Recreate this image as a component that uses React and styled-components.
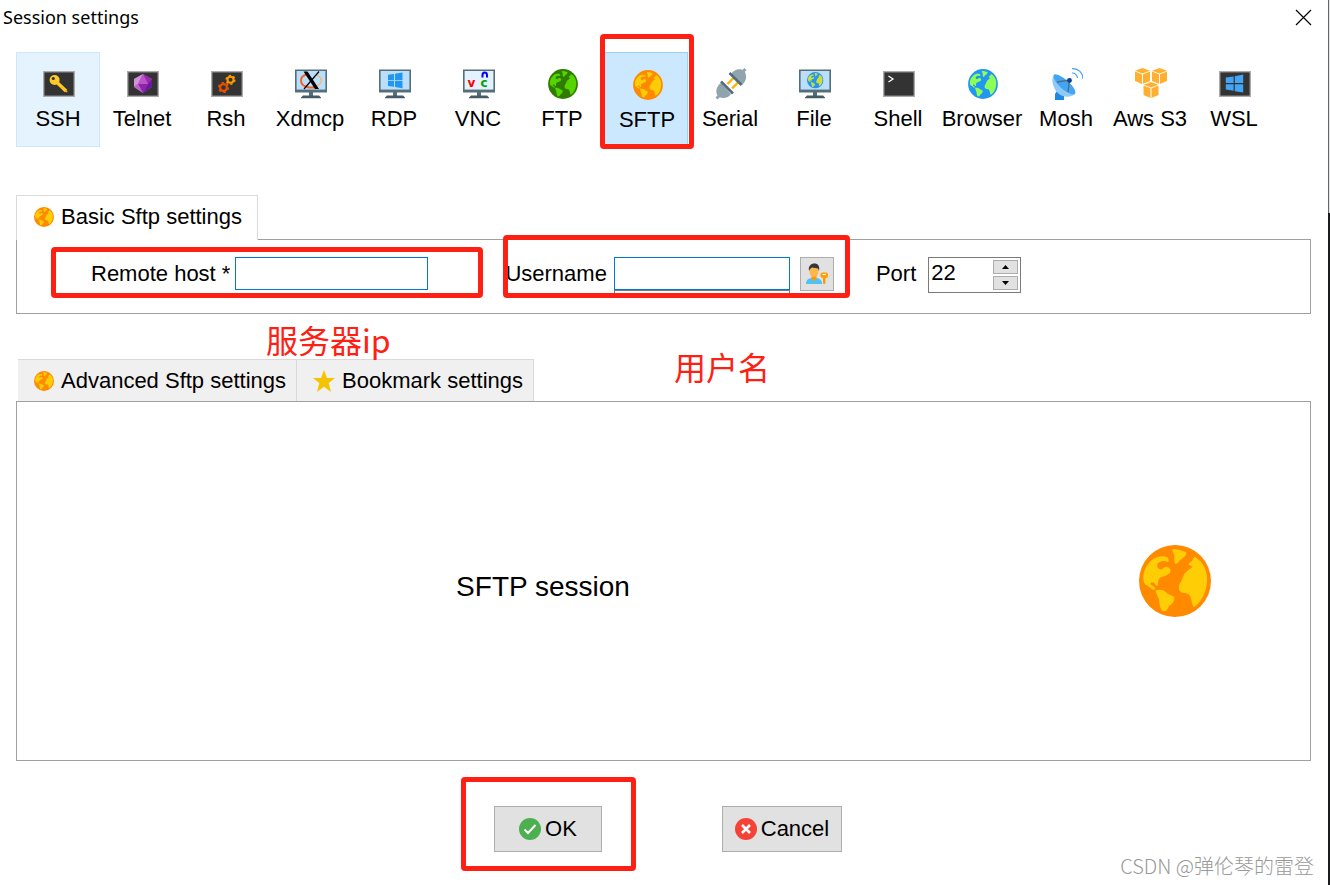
import styled, { createGlobalStyle, css } from 'styled-components';

const GlobalStyle = createGlobalStyle`
  * {
    box-sizing: border-box;
  }

  body {
    margin: 0;
    background: #fff;
    color: #000;
    font-family: 'Liberation Sans', Arial, sans-serif;
    font-size: 22px;
    line-height: 24px;
  }

  button,
  input {
    margin: 0;
    padding: 0;
    border-radius: 0;
    color: inherit;
    font: inherit;
  }

  svg {
    display: block;
    flex: none;
  }
`;

const Page = styled.div`
  display: grid;
  grid-template-columns: minmax(0, 1fr) 2px;
  min-height: 100vh;
`;

const WindowEdge = styled.div`
  background:
    linear-gradient(#66676a, #66676a) 0 0 / 1px 213px no-repeat,
    linear-gradient(#e4e4e4 213px, #1b1c1e 213px);
`;

const Dialog = styled.main`
  display: flex;
  flex-direction: column;
`;

const TitleBar = styled.header`
  display: flex;
  align-items: center;
  justify-content: space-between;
  height: 36px;
  padding: 0 16px 2px 3px;
`;

const Title = styled.h1`
  margin: 0;
  font-family: 'Noto Sans', sans-serif;
  font-size: 18px;
  font-weight: 400;
  line-height: 24px;
`;

const CloseButton = styled.button`
  border: 0;
  background: none;
`;

const Content = styled.div`
  display: flex;
  flex-direction: column;
  padding: 16px 17px 0 16px;
`;

const Toolbar = styled.nav`
  display: flex;
  margin-bottom: 48px;
`;

const Tool = styled.button`
  position: relative;
  display: flex;
  flex-direction: column;
  align-items: center;
  gap: 7px;
  width: 84px;
  height: 95px;
  padding-top: 15px;
  border: 1px solid transparent;
  background: none;
  white-space: nowrap;

  svg {
    margin-left: 2px;
  }

  ${(props) =>
    props.$state === 'hover' &&
    css`
      background: #e5f3ff;
      border-color: #cce8ff;
    `}

  ${(props) =>
    props.$state === 'active' &&
    css`
      padding: 16px 0 0 2px;
      background: #cce8ff;
      border-color: #99d1ff;
    `}
`;

// red rectangle drawn over a control
const Mark = styled.span`
  position: absolute;
  inset: ${(props) => props.$inset};
  z-index: 2;
  border: 5px solid #ff2014;
  border-radius: 4px;
  pointer-events: none;
`;

const Note = styled.p`
  position: absolute;
  top: ${(props) => props.$top};
  left: ${(props) => props.$left};
  z-index: 2;
  margin: 0;
  color: #ff2014;
  font-family: 'Noto Sans CJK SC', sans-serif;
  font-size: 32px;
  font-weight: 400;
  line-height: 40px;
  white-space: nowrap;
`;

const Section = styled.section`
  position: relative;
  margin-bottom: 45px;
`;

const Tabs = styled.div`
  display: flex;
  padding-left: ${(props) => (props.$inactive ? '2px' : 0)};
`;

const Tab = styled.button`
  display: flex;
  align-items: center;
  gap: 7px;
  height: 42px;
  padding: 0 10px 0 16px;
  border: solid #d9d9d9;
  border-width: 1px 1px 0 0;
  background: #f0f0f0;
  white-space: nowrap;

  ${(props) =>
    props.$selected &&
    css`
      position: relative;
      z-index: 1;
      height: 45px;
      margin-bottom: -1px;
      padding: 0 15px 2px 17px;
      border-width: 1px 1px 0;
      background: #fff;
    `}
`;

const FormPanel = styled.form`
  display: flex;
  align-items: flex-start;
  padding: 17px 16px 20px 74px;
  border: 1px solid #a0a0a0;
`;

const Field = styled.div`
  position: relative;
  display: flex;
  gap: ${(props) => props.$gap};
  margin-right: ${(props) => props.$after || 0};

  label {
    line-height: 34px;
    white-space: nowrap;
  }
`;

const TextInput = styled.input`
  width: ${(props) => props.$width};
  height: 33px;
  padding: 0 4px;
  border: 1px solid #0078d7;
  outline: 0;
  background: #fff;
`;

const Combo = styled.div`
  height: 36px;
  background: linear-gradient(#7a7a7a, #7a7a7a) 0 33px / 100% 1px no-repeat;
  border: solid #7a7a7a;
  border-width: 0 1px;

  input {
    display: block;
    margin: 0 -1px;
  }
`;

const UserButton = styled.button`
  display: grid;
  place-items: center;
  width: 34px;
  height: 34px;
  margin-left: 3px;
  border: 1px solid #adadad;
  background: #e1e1e1;
`;

const Spin = styled.div`
  display: flex;
  width: 93px;
  height: 36px;
  padding: 2px;
  border: 1px solid #7a7a7a;

  input {
    flex: 1;
    min-width: 0;
    height: 26px;
    border: 0;
    outline: 0;
  }
`;

const SpinButtons = styled.div`
  display: grid;
  gap: 2px;
  width: 25px;

  button {
    display: grid;
    place-items: center;
    border: 1px solid #adadad;
    background: #e1e1e1;
  }
`;

const SessionPanel = styled.div`
  display: flex;
  align-items: center;
  gap: 70px;
  min-height: 360px;
  padding-right: 99px;
  border: 1px solid #a0a0a0;
`;

const SessionName = styled.h2`
  flex: 1;
  margin: 0;
  padding-top: 12px;
  font-size: 28px;
  font-weight: 400;
  line-height: 32px;
  text-align: center;
`;

const Actions = styled.div`
  display: flex;
  justify-content: center;
  gap: 120px;
  padding-left: 9px;
`;

const ActionButton = styled.button`
  position: relative;
  display: flex;
  align-items: center;
  justify-content: center;
  gap: 4px;
  width: ${(props) => props.$width};
  height: 46px;
  border: 1px solid #adadad;
  background: #e1e1e1;
`;

const Watermark = styled.footer`
  padding: 2px 14px 0 0;
  color: #999;
  font-family: 'Noto Sans CJK SC', sans-serif;
  font-size: 20px;
  font-weight: 300;
  text-align: right;
`;

const Globe = ({ size = 30, sea = '#ff8a00', land = '#ffcd05', ...rest }) => (
  <svg width={size} height={size} viewBox="0 0 216 216" {...rest}>
    <circle cx="108" cy="108" r="108" fill={sea} />
    <g fill={land}>
      <path d="M13 100C12 80 22 58 40 44C55 33 72 31 84 36C90 41 91 46 87 51C78 46 65 47 57 55C51 64 57 73 67 74C73 70 76 64 83 65C93 67 97 76 93 83C85 92 72 94 63 98C57 104 57 112 57 120C53 125 51 124 49 118C44 109 35 111 34 117C36 122 43 121 47 127C50 133 46 137 40 133C33 128 27 122 20 119C14 114 13 107 13 100Z" />
      <path d="M50 136C60 133 74 134 80 141C87 150 103 151 106 157C107 168 100 178 90 183C86 192 84 199 72 199C64 192 61 181 61 169C61 158 51 151 50 136Z" />
      <path d="M101 13C116 13 133 17 142 23C141 35 130 40 123 45C119 53 112 58 108 56C108 48 104 44 106 36C107 27 98 20 101 13Z" />
      <path d="M166 35C187 45 201 67 204 94C206 132 192 168 165 187C156 178 160 161 151 150C144 140 128 148 122 137C117 126 120 118 126 110C131 101 134 85 144 79L161 65L150 60C148 52 158 52 160 46Z" />
    </g>
  </svg>
);

const Screen = ({ children }) => (
  <svg width="32" height="32" viewBox="0 0 32 32">
    <rect x=".7" y="3.7" width="30.6" height="24.6" fill="#333" stroke="#aaa" strokeWidth="1.4" />
    {children}
  </svg>
);

const Monitor = ({ fill = '#bbdefb', children }) => (
  <svg width="32" height="32" viewBox="0 0 32 32">
    <path d="M14 24h4v4h-4z" fill="#546e7a" />
    <path d="M8 27.5h16l2 2v.8H6v-.8z" fill="#455a64" />
    <path d="M0 1.5h32v23H0z" fill="#546e7a" />
    <path d="M1.6 3h28.8v18.6H1.6z" fill={fill} />
    {children}
  </svg>
);

const KeyIcon = () => (
  <Screen>
    <path d="M13 13.5l10 9.5" stroke="#ffca28" strokeWidth="3.4" />
    <path d="M17 19.5l1.2-1 2 1.500-.2 1 2 1-.2 1.500 2 1 1-1.500" fill="#ffb300" />
    <circle cx="11.600" cy="12" r="5" fill="#ffca28" />
    <circle cx="10.300" cy="10.500" r="1.600" fill="#333" />
  </Screen>
);

const GemIcon = () => (
  <Screen>
    <path d="M16 6l9 5v8l-9 6-9-6v-8z" fill="#ab47bc" />
    <path d="M16 6l-9 5v8l4-3z" fill="#ce93d8" />
    <path d="M16 6l9 5-4 6z" fill="#9c27b0" />
    <path d="M11 16h10l-5 9z" fill="#8e24aa" />
    <path d="M25 11v8l-9 6 5-9z" fill="#6a1b9a" />
    <path d="M7 19l4-3 5 9z" fill="#ba68c8" />
    <path d="M16 6l5 10H11z" fill="#ba55c8" />
  </Screen>
);

const GearsIcon = () => (
  <Screen>
    <g fill="none">
      <circle cx="19.5" cy="11.8" r="3" stroke="#ff9800" strokeWidth="2" />
      <circle cx="19.5" cy="11.8" r="4.3" stroke="#ff9800" strokeWidth="1.6" strokeDasharray="2.2 2.3" />
      <circle cx="12.5" cy="19.5" r="3.4" stroke="#e65100" strokeWidth="2.2" />
      <circle cx="12.5" cy="19.5" r="4.8" stroke="#e65100" strokeWidth="1.6" strokeDasharray="2.5 2.53" />
    </g>
  </Screen>
);

const XIcon = () => (
  <Monitor>
    <g fill="none">
      <path d="M12 6.500C4 8 4 17 12 19c4 1 7 .5 9-.5" stroke="#f4622a" strokeWidth="2" />
      <path d="M21 7c7 2 7 8 .5 11" stroke="#ffb25c" strokeWidth="1.300" />
    </g>
    <path d="M8.500 3.500h4L24 21h-4z" />
    <path d="M24 3.500L9 21" stroke="#000" strokeWidth="1.200" />
  </Monitor>
);

const WindowsLogo = ({ fill }) => (
  <path d="M9 8.3l6-.9v6H9zM16 7.3l7.5-1.3v7.4H16zM9 14.3h6v6l-6-.8zM16 14.3h7.5v7.5L16 20.5z" fill={fill} />
);

const RdpIcon = () => (
  <Monitor>
    <g transform="translate(0 -1.5)">
      <WindowsLogo fill="#2196f3" />
    </g>
  </Monitor>
);

const VncIcon = () => (
  <Monitor fill="#e3f2fd">
    <g fontFamily="DejaVu Sans" fontWeight="bold" fontSize="12">
      <text x="4.5" y="19" fill="#f00">v</text>
      <text x="17.5" y="19" fill="#00a000">c</text>
    </g>
    <path d="M19.5 9.500V7Q19.500 4.500 21.700 4.500T24 7V9.500" fill="none" stroke="#00f" strokeWidth="2" />
  </Monitor>
);

const SerialIcon = () => (
  <svg width="32" height="32" viewBox="0 0 32 32">
    <path d="M27 4.5L30.500 1M1.500 30.500L5 27" stroke="#90a4ae" strokeWidth="3" />
    <path d="M18.500 10l-6 6M23 14.500L17 20.500" stroke="#ffb300" strokeWidth="2.400" />
    <path d="M16 6C19 1 26 0 29 3s3 10-2 14z" fill="#90a4ae" />
    <path d="M6 15c-5 3-6 10-3 13s10 3 13-2z" fill="#90a4ae" />
    <path d="M14.500 5l12 12M6 13.500l12 12" stroke="#546e7a" strokeWidth="2.600" />
  </svg>
);

const FileIcon = () => (
  <Monitor>
    <Globe x="8" y="4" size="16.5" sea="#2196f3" land="#cddc39" />
  </Monitor>
);

const ShellIcon = () => (
  <Screen>
    <path d="M5.5 8l4.5 3-4.5 3" fill="none" stroke="#fff" strokeWidth="1.3" />
  </Screen>
);

const DishIcon = () => (
  <svg width="32" height="32" viewBox="0 0 32 32">
    <path d="M4 26l2-3 7 5v4H4z" fill="#1e88e5" />
    <path d="M3 7C-1 12 3 22 8 26s13 3 16 0z" fill="#90caf9" />
    <path d="M3 6.5c5-2 24 13 21 19.500-6 3-24-13-21-19.500z" fill="#42a5f5" />
    <path d="M6 14l12.500-2L17 24" fill="none" stroke="#546e7a" strokeWidth="1.300" />
    <circle cx="18.500" cy="12.500" r="2.400" fill="#0d3f95" />
    <path d="M21 5c3 0 5 2 5.500 5M21 .7C27.500 0 32 5 32 11" fill="none" stroke="#42a5f5" strokeWidth="1.200" />
  </svg>
);

const Cube = ({ x, y }) => (
  <g transform={`translate(${x} ${y})`} fill="#ffb031">
    <path d="M7.5 0L15 2.8 7.5 5.600 0 2.800z" />
    <path d="M0 3.600l7 2.700V16l-7-3z" />
    <path d="M15 3.600L8 6.300V16l7-3z" />
  </g>
);

const CubesIcon = () => (
  <svg width="32" height="32" viewBox="0 0 32 32">
    <Cube x="0" y="0" />
    <Cube x="17" y="0" />
    <path d="M16 13l8.500 3.200V28L16 31l-8.500-3V16.200z" fill="#fff" />
    <Cube x="8.5" y="14" />
  </svg>
);

const WslIcon = () => (
  <Screen>
    <g transform="translate(-2.2 -.6) scale(1.2)">
      <path d="M7.5 8.500l6.500-1v5.500H7.500zM15 7.300l7-1.300v7H15zM7.500 14h6.500v5.500l-6.500-1zM15 14h7v7L15 19.800z" fill="#42a5f5" />
    </g>
  </Screen>
);

const UserKeyIcon = () => (
  <svg width="24" height="24" viewBox="0 0 24 24">
    <path d="M1 22c0-5 3-6 8-6s8 1 8 6z" fill="#4fc3f7" />
    <path d="M6.5 14h5v3L9 19l-2.500-2z" fill="#ff9800" />
    <ellipse cx="9" cy="9.500" rx="4.500" ry="5.500" fill="#ffb74d" />
    <path d="M4 9c-1-5 2-7.500 5.500-7.500S15 4 14 9l-1-2.500L7 5.500 5 7z" fill="#37353a" />
    <path d="M18 14h2.500v7L19 22.500 18 21z" fill="#ff9800" />
    <rect x="15.500" y="10.500" width="7.500" height="5.500" rx="2" fill="#ffa000" />
    <path d="M17.500 12.500h3.500" stroke="#fff" />
  </svg>
);

const StarIcon = () => (
  <svg width="22" height="22" viewBox="0 0 22 22">
    <path d="M11 0l3 8h8l-6.300 5L18 22l-7-5.200L4 22l2.300-9L0 8h8z" fill="#f5c400" />
  </svg>
);

const StatusIcon = ({ color, d, width }) => (
  <svg width="22" height="22" viewBox="0 0 22 22">
    <circle cx="11" cy="11" r="11" fill={color} />
    <path d={d} fill="none" stroke="#fff" strokeWidth={width} />
  </svg>
);

const Arrow = ({ d }) => (
  <svg width="7" height="4" viewBox="0 0 7 4">
    <path d={d} />
  </svg>
);

const tools = [
  { name: 'SSH', icon: <KeyIcon />, state: 'hover' },
  { name: 'Telnet', icon: <GemIcon /> },
  { name: 'Rsh', icon: <GearsIcon /> },
  { name: 'Xdmcp', icon: <XIcon /> },
  { name: 'RDP', icon: <RdpIcon /> },
  { name: 'VNC', icon: <VncIcon /> },
  { name: 'FTP', icon: <Globe size={32} viewBox="-8 -8 232 232" sea="#2e7d00" land="#55d400" /> },
  { name: 'SFTP', icon: <Globe size={32} viewBox="-8 -8 232 232" />, state: 'active' },
  { name: 'Serial', icon: <SerialIcon /> },
  { name: 'File', icon: <FileIcon /> },
  { name: 'Shell', icon: <ShellIcon /> },
  { name: 'Browser', icon: <Globe size={32} viewBox="-8 -8 232 232" sea="#2196f3" land="#8dff57" /> },
  { name: 'Mosh', icon: <DishIcon /> },
  { name: 'Aws S3', icon: <CubesIcon /> },
  { name: 'WSL', icon: <WslIcon /> },
];

const App = () => (
  <>
    <GlobalStyle />
    <Page>
      <Dialog>
        <TitleBar>
          <Title>Session settings</Title>
          <CloseButton type="button" aria-label="Close">
            <svg width="17" height="17" viewBox="0 0 17 17">
              <path d="M1 1l15 15M16 1L1 16" stroke="#000" strokeWidth="1.2" />
            </svg>
          </CloseButton>
        </TitleBar>
        <Content>
          <Toolbar>
            {tools.map(({ name, icon, state }) => (
              <Tool key={name} type="button" $state={state}>
                {icon}
                {name}
                {state === 'active' && <Mark $inset="-19px -7px -3px -5px" />}
              </Tool>
            ))}
          </Toolbar>

          <Section>
            <Tabs>
              <Tab type="button" $selected>
                <Globe size={20} />
                Basic Sftp settings
              </Tab>
            </Tabs>
            <FormPanel>
              <Field $gap="5px" $after="77px">
                <label htmlFor="host">Remote host *</label>
                <TextInput id="host" $width="193px" />
                <Mark $inset="-10px -55px -7px -40px" />
              </Field>
              <Field $gap="7px" $after="42px">
                <label htmlFor="username">Username</label>
                <Combo>
                  <TextInput id="username" $width="176px" />
                </Combo>
                <UserButton type="button" aria-label="Manage users">
                  <UserKeyIcon />
                </UserButton>
                <Mark $inset="-22px -16px -5px -2px" />
              </Field>
              <Field $gap="12px">
                <label htmlFor="port">Port</label>
                <Spin>
                  <input id="port" defaultValue="22" />
                  <SpinButtons>
                    <button type="button" aria-label="Increase port">
                      <Arrow d="M0 4L3.5 0 7 4z" />
                    </button>
                    <button type="button" aria-label="Decrease port">
                      <Arrow d="M0 0l3.5 4L7 0z" />
                    </button>
                  </SpinButtons>
                </Spin>
              </Field>
            </FormPanel>
            <Note $top="124px" $left="250px">服务器ip</Note>
            <Note $top="151px" $left="658px">用户名</Note>
          </Section>

          <Section>
            <Tabs $inactive>
              <Tab type="button">
                <Globe size={20} />
                Advanced Sftp settings
              </Tab>
              <Tab type="button">
                <StarIcon />
                Bookmark settings
              </Tab>
            </Tabs>
            <SessionPanel>
              <SessionName>SFTP session</SessionName>
              <Globe size={72} />
            </SessionPanel>
          </Section>

          <Actions>
            <ActionButton type="button" $width="108px">
              <StatusIcon color="#4caf50" d="M5.5 11.5l3.5 3.5 7.5-8" width="2" />
              OK
              <Mark $inset="-30px -35px -20px -34px" />
            </ActionButton>
            <ActionButton type="button" $width="120px">
              <StatusIcon color="#f44336" d="M7 7l8 8M15 7l-8 8" width="2.6" />
              Cancel
            </ActionButton>
          </Actions>
        </Content>
        <Watermark>CSDN @弹伦琴的雷登</Watermark>
      </Dialog>
      <WindowEdge />
    </Page>
  </>
);

export default App;
